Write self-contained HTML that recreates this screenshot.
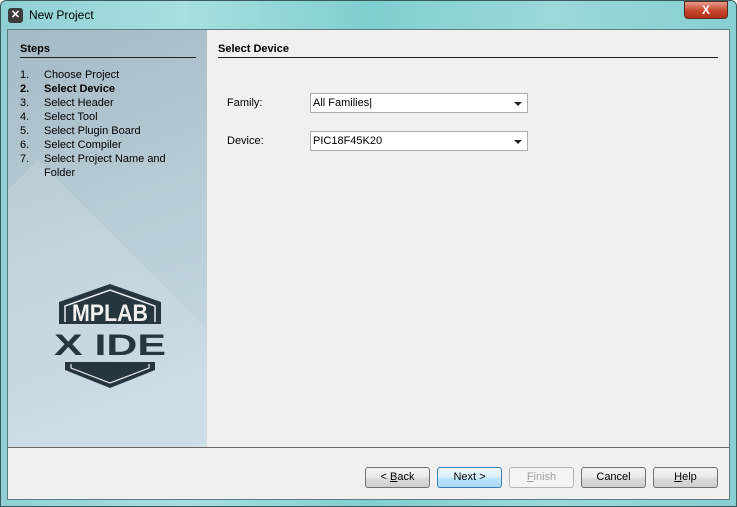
<!DOCTYPE html>
<html><head><style>
*{margin:0;padding:0;box-sizing:border-box}
html,body{width:737px;height:507px;overflow:hidden}
body{font-family:"Liberation Sans",sans-serif;font-size:11px;color:#000;background:#fff;position:relative}
.win{position:absolute;left:0;top:0;width:737px;height:507px;border:1px solid #3a5a5e;border-radius:6px 6px 0 0;background:linear-gradient(90deg,#8fd0d4 0%,#a8dfe0 25%,#7fcfd0 50%,#9bd8da 75%,#86cfd2 100%);overflow:hidden}
.title{position:absolute;left:28px;top:7px;font-size:12px;color:#000}
.ico{position:absolute;left:7px;top:7px;width:15px;height:15px;background:#3c3c3c;border-radius:3px;color:#fff;font-size:11px;font-weight:bold;text-align:center;line-height:15px}
.close{position:absolute;left:683px;top:0;width:44px;height:18px;border:1px solid #5a2a20;border-radius:0 0 4px 4px;background:linear-gradient(#e8a090,#c84a30 50%,#b03018);color:#fff;font-weight:bold;text-align:center;line-height:17px;font-size:12px}
.inner{position:absolute;left:6px;top:28px;width:723px;height:471px;background:#f0f0f0;border:1px solid #5f7c80}
.left{position:absolute;left:0;top:0;width:199px;height:417px;background:linear-gradient(160deg,#a4bac6 0%,#b8ccd7 45%,#c8dbe5 100%);overflow:hidden}
.tri{position:absolute;left:30px;top:130px;width:400px;height:400px;background:rgba(255,255,255,.13);transform:rotate(45deg);transform-origin:0 0}
.steps{position:absolute;left:12px;top:13px;font-weight:bold;font-size:11px}
.sl{position:absolute;left:12px;top:27px;width:176px;border-top:1px solid #222}
ol{position:absolute;left:12px;top:38px;list-style:none;line-height:14px}
ol li{display:flex}
ol li span{width:24px;display:inline-block}
.bottom{position:absolute;left:0;top:417px;width:721px;border-top:1px solid #666}
.btn{position:absolute;top:466px;height:21px;border:1px solid #707070;border-radius:3px;background:linear-gradient(#f2f2f2,#ebebeb 50%,#dddddd 51%,#cfcfcf);text-align:center;line-height:19px;width:65px}
.combo{position:absolute;left:302px;width:218px;height:20px;border:1px solid #abadb3;background:#fff;padding-left:2px;line-height:18px}
.combo:after{content:"";position:absolute;right:5px;top:8px;border-left:4px solid transparent;border-right:4px solid transparent;border-top:4px solid #222}
</style></head><body>
<div class="win">
<div class="ico">✕</div>
<div class="title">New Project</div>
<div class="close">X</div>
<div class="inner">
 <div class="left">
  <div class="tri"></div>
  <div class="steps">Steps</div><div class="sl"></div>
  <ol>
   <li><span>1.</span>Choose Project</li>
   <li style="font-weight:bold"><span>2.</span>Select Device</li>
   <li><span>3.</span>Select Header</li>
   <li><span>4.</span>Select Tool</li>
   <li><span>5.</span>Select Plugin Board</li>
   <li><span>6.</span>Select Compiler</li>
   <li><span>7.</span>Select Project Name and</li>
   <li><span></span>Folder</li>
  </ol>
  <svg style="position:absolute;left:43px;top:252px" width="118" height="107" viewBox="0 0 118 107">
   <polygon points="8,20 59,2 110,20 110,42 8,42" fill="#25363f"/>
   <polyline points="14,40 14,24 59,8 104,24 104,40" fill="none" stroke="#e8eef0" stroke-width="1.5"/>
   <text x="59" y="39" text-anchor="middle" font-family="Liberation Sans" font-weight="bold" font-size="24" fill="#f0f0f0" textLength="76" lengthAdjust="spacingAndGlyphs">MPLAB</text>
   <text x="59" y="73" text-anchor="middle" font-family="Liberation Sans" font-weight="bold" font-size="30" fill="#25363f" textLength="112" lengthAdjust="spacingAndGlyphs">X IDE</text>
   <polygon points="14,80 104,80 104,88 59,106 14,88" fill="#25363f"/>
   <polyline points="20,82 20,86 59,101 98,86 98,82" fill="none" stroke="#e8eef0" stroke-width="1.2"/>
  </svg>
 </div>
 <div style="position:absolute;left:210px;top:13px;font-weight:bold">Select Device</div>
 <div style="position:absolute;left:210px;top:27px;width:500px;border-top:1px solid #222"></div>
 <div style="position:absolute;left:219px;top:67px">Family:</div>
 <div class="combo" style="top:63px">All Families|</div>
 <div style="position:absolute;left:219px;top:105px">Device:</div>
 <div class="combo" style="top:101px">PIC18F45K20</div>
 <div class="bottom"></div>
</div>
<div class="btn" style="left:364px">&lt; <u>B</u>ack</div>
<div class="btn" style="left:436px;border-color:#3c7fb1;background:linear-gradient(#eaf6fd,#d9f0fc 50%,#bee6fd 51%,#a7d9f5)">Next &gt;</div>
<div class="btn" style="left:508px;color:#a0a0a0;border-color:#b5b5b5;background:#f4f4f4"><u>F</u>inish</div>
<div class="btn" style="left:580px">Cancel</div>
<div class="btn" style="left:652px"><u>H</u>elp</div>
</div>
</body></html>
